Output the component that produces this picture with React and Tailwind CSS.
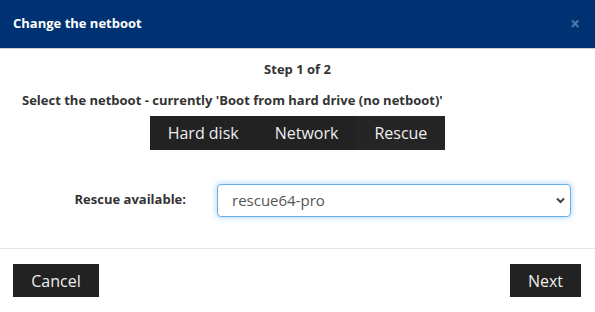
export default function App() {
  const tabs = ["Hard disk", "Network", "Rescue"];
  const active = "Rescue";

  return (
    <div className="w-[595px] h-[312px] bg-white text-[#333] overflow-hidden" style={{ fontFamily: '"Open Sans", sans-serif' }}>
      <div className="h-[49px] bg-[#003273] border-b border-[#cfcfcf] flex items-center justify-between pl-[13px] pr-[15px]">
        <h1 className="text-[13px] font-bold text-white">Change the netboot</h1>
        <span className="text-[#5a77a6] text-[17px] font-bold leading-none -mt-[2px]">×</span>
      </div>

      <div className="flex flex-col items-center pt-[11px]">
        <div className="text-[13px] font-bold leading-[18px]">Step 1 of 2</div>
        <div className="self-start ml-[22px] mt-[13px] text-[13px] font-bold leading-[18px]">
          Select the netboot - currently 'Boot from hard drive (no netboot)'
        </div>
        <div className="flex mt-[7px] bg-[#222]">
          {tabs.map((t) => (
            <button
              key={t}
              className={
                "h-[34px] px-[18px] text-[16px] text-[#eee] " +
                (t === active ? "bg-[#252525]" : "bg-[#222]")
              }
            >
              {t}
            </button>
          ))}
        </div>
      </div>

      <div className="flex items-center mt-[33px] h-[34px]">
        <label className="w-[186px] text-right text-[13px] font-bold">Rescue available:</label>
        <div className="relative ml-[31px] w-[354px]">
          <select className="w-full h-[33px] appearance-none rounded-[4px] border border-[#66afe9] shadow-[0_0_6px_rgba(102,175,233,0.6)] pl-[14px] text-[15px] text-[#555] bg-white outline-none">
            <option>rescue64-pro</option>
          </select>
          <svg className="absolute right-[6px] top-[13px] pointer-events-none" width="9" height="7" viewBox="0 0 9 7">
            <path d="M1 1.5 L4.5 5 L8 1.5" fill="none" stroke="#444" strokeWidth="2" />
          </svg>
        </div>
      </div>

      <div className="mt-[31px] border-t border-[#e5e5e5] flex justify-between px-[13px] pt-[15px]">
        <button className="h-[33px] w-[86px] bg-[#222] text-[#eee] text-[16px]">Cancel</button>
        <button className="h-[33px] w-[71px] bg-[#222] text-[#eee] text-[16px] mr-[1px]">Next</button>
      </div>
    </div>
  );
}
